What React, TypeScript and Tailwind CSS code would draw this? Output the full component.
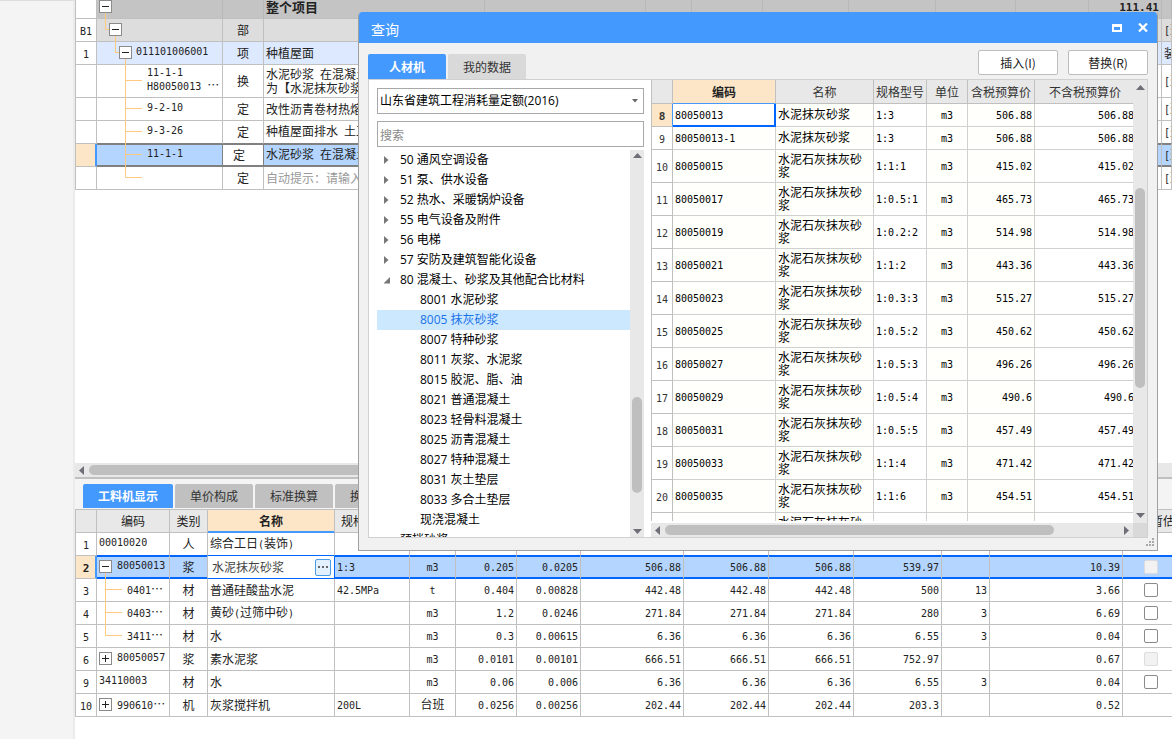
import React from "react";

const SANS = "font-['Noto_Sans_CJK_SC',sans-serif]";
const UI = "font-['Open_Sans','Noto_Sans_CJK_SC',sans-serif]";

/* Renders Latin runs in a half-width monospace beside full-width Chinese text. */
function Txt({ s, bold }: { s: string; bold?: boolean }) {
  return (
    <>
      {s.split(/([\x20-\x7e]+)/).map((part, i) =>
        i % 2 ? (
          <span
            key={i}
            className={`whitespace-pre font-['DejaVu_Sans_Mono',monospace] leading-none ${bold ? "text-[11px]" : "text-[10px]"}`}
          >
            {part}
          </span>
        ) : (
          part
        ),
      )}
    </>
  );
}

type Guide = {
  w: number;
  h?: number;
  lines?: string;
  box?: { x: number; plus?: boolean };
};

function TreeGuide({ w, h = 22, lines, box }: Guide) {
  return (
    <svg width={w} height={h} className="block shrink-0 overflow-visible" aria-hidden="true">
      {lines && <path d={lines} fill="none" stroke="#ffc981" />}
      {box && (
        <g fill="none">
          <rect x={box.x - 6} y="4.5" width="12" height="12" fill="#fff" stroke="#8a8a8a" />
          <path
            d={`M${box.x - 3.5} 10.5h7${box.plus ? "M" + box.x + " 7v7" : ""}`}
            stroke="#222"
          />
        </g>
      )}
    </svg>
  );
}

type TopRow = {
  no: string;
  guide: Guide;
  code?: string[];
  kind: string;
  name: string[];
  total?: string;
  tail?: string;
  bg: string;
  tall?: boolean;
  state?: "root" | "before" | "selected" | "hint";
};

const child = "M28.5 -1V22.5M28.5 10.5H45";
const topRows: TopRow[] = [
  { no: "", guide: { w: 39, lines: "M8.5 17V33.5H12", box: { x: 8.5 } }, kind: "", name: ["整个项目"], total: "111.41", bg: "bg-[#c4c4c4]", state: "root" },
  { no: "B1", guide: { w: 39, lines: "M8.5 -1V10.5H12M18.5 17V33.5H22", box: { x: 18.5 } }, kind: "部", name: [], tail: "[建", bg: "bg-[#dddddd]" },
  { no: "1", guide: { w: 39, lines: "M18.5 -1V10.5H22M28.5 17V23", box: { x: 28.5 } }, code: ["011101006001"], kind: "项", name: ["种植屋面"], tail: "装", bg: "bg-[#dde9ff]" },
  { no: "", guide: { w: 50, h: 32, lines: "M28.5 -1V32.5M28.5 15.5H45" }, code: ["11-1-1", "H80050013 …"], kind: "换", name: ["水泥砂浆 在混凝土", "为【水泥抹灰砂浆"], tail: "[建", bg: "bg-white", tall: true },
  { no: "", guide: { w: 50, lines: child }, code: ["9-2-10"], kind: "定", name: ["改性沥青卷材热熔"], tail: "[建", bg: "bg-white" },
  { no: "", guide: { w: 50, lines: child }, code: ["9-3-26"], kind: "定", name: ["种植屋面排水 土工"], tail: "[建", bg: "bg-white", state: "before" },
  { no: "", guide: { w: 50, lines: child }, code: ["11-1-1"], kind: "定", name: ["水泥砂浆 在混凝土"], tail: "[建", bg: "bg-[#b3d5ff]", state: "selected" },
  { no: "", guide: { w: 50, lines: "M28.5 -1V10.5H45" }, kind: "定", name: ["自动提示：请输入"], tail: "[建", bg: "bg-white", state: "hint" },
];

function Lines({ items, bold }: { items: string[]; bold?: boolean }) {
  return (
    <>
      {items.map((l) => (
        <div key={l} className="flex items-baseline">
          <Txt s={l} bold={bold} />
        </div>
      ))}
    </>
  );
}

function ItemsTable() {
  return (
    <table className="-mt-1 w-full table-fixed border-separate border-spacing-0 whitespace-nowrap border-l border-[#c0c0c0] text-xs leading-[13px] text-[#222]">
      <colgroup>
        <col className="w-[21px]" />
        <col className="w-[126px]" />
        <col className="w-[41px]" />
        <col className="w-[221px]" />
        <col className="w-[161px]" />
        <col className="w-[46px]" />
        <col className="w-[71px]" />
        <col className="w-[86px]" />
        <col className="w-[87px]" />
        <col className="w-[80px]" />
        <col className="w-[73px]" />
        <col className="w-[73px]" />
        <col />
      </colgroup>
      <tbody>
        {topRows.map((r, i) => {
          const sel = r.state === "selected";
          const root = r.state === "root";
          const edge = sel || r.state === "before" ? "border-b-[#808080]" : "border-b-[#c0c0c0]";
          const right = root ? "border-r-[#b8b8b8]" : "border-r-[#c0c0c0]";
          const ring = sel ? "shadow-[inset_0_1px_0_#808080,inset_0_-1px_0_#808080]" : "";
          const cell = `overflow-hidden border-r border-b p-0 pb-0.5 ${edge} ${ring}`;
          return (
            <tr key={i} className={r.tall ? "h-[33px]" : "h-[23px]"}>
              <td
                className={`border-r border-b border-b-[#c0c0c0] p-0 text-center ${sel ? "border-r-[#4499ff] bg-[#fde6c8] shadow-[inset_-1px_0_0_#4499ff]" : "border-r-[#c0c0c0] bg-white"}`}
              >
                <Txt s={r.no} />
              </td>
              <td className={`border-r border-b p-0 ${edge} ${ring} ${sel ? "border-r-[#808080]" : right} ${r.bg}`}>
                <div className="flex items-center">
                  <TreeGuide {...r.guide} />
                  <div className="pb-0.5">{r.code && <Lines items={r.code} />}</div>
                </div>
              </td>
              <td className={`${cell} ${sel ? "border-r-[#808080] bg-white pr-2" : `${right} ${r.bg}`} text-center`}>{r.kind}</td>
              <td
                className={`${cell} ${right} ${r.bg} pl-0.5 ${root ? "text-[13px] font-bold" : ""} ${r.state === "hint" ? "text-[#999]" : ""}`}
              >
                <Lines items={r.name} />
              </td>
              {Array.from({ length: 8 }, (_, k) => (
                <td key={k} className={`${cell} ${right} ${r.bg} text-right font-bold`}>
                  {k === 7 && r.total ? (
                    <div className="pr-0.5">
                      <Txt s={r.total} bold />
                    </div>
                  ) : null}
                </td>
              ))}
              <td className={`${cell} ${right} ${r.bg} pl-0.5`}>
                <Txt s={r.tail ?? ""} />
              </td>
            </tr>
          );
        })}
      </tbody>
    </table>
  );
}

type Res = {
  no: string;
  guide?: Guide;
  code: string;
  kind: string;
  name: string;
  spec: string;
  unit: string;
  nums: string[];
  check: "on" | "off" | "none";
};

const leaf: Guide = { w: 30, lines: "M8.5 -1V22.5M8.5 10.5H25" };
const resources: Res[] = [
  { no: "1", code: "00010020", kind: "人", name: "综合工日(装饰)", spec: "", unit: "", nums: ["", "", "", "", "", "", "", ""], check: "none" },
  { no: "2", guide: { w: 20, lines: "M8.5 17V22.5", box: { x: 8.5 } }, code: "80050013", kind: "浆", name: "水泥抹灰砂浆", spec: "1:3", unit: "m3", nums: ["0.205", "0.0205", "506.88", "506.88", "506.88", "539.97", "", "10.39"], check: "off" },
  { no: "3", guide: leaf, code: "0401…", kind: "材", name: "普通硅酸盐水泥", spec: "42.5MPa", unit: "t", nums: ["0.404", "0.00828", "442.48", "442.48", "442.48", "500", "13", "3.66"], check: "on" },
  { no: "4", guide: leaf, code: "0403…", kind: "材", name: "黄砂(过筛中砂)", spec: "", unit: "m3", nums: ["1.2", "0.0246", "271.84", "271.84", "271.84", "280", "3", "6.69"], check: "on" },
  { no: "5", guide: { w: 30, lines: "M8.5 -1V10.5H25" }, code: "3411…", kind: "材", name: "水", spec: "", unit: "m3", nums: ["0.3", "0.00615", "6.36", "6.36", "6.36", "6.55", "3", "0.04"], check: "on" },
  { no: "6", guide: { w: 20, box: { x: 8.5, plus: true } }, code: "80050057", kind: "浆", name: "素水泥浆", spec: "", unit: "m3", nums: ["0.0101", "0.00101", "666.51", "666.51", "666.51", "752.97", "", "0.67"], check: "off" },
  { no: "9", code: "34110003", kind: "材", name: "水", spec: "", unit: "m3", nums: ["0.06", "0.006", "6.36", "6.36", "6.36", "6.55", "3", "0.04"], check: "on" },
  { no: "10", guide: { w: 20, box: { x: 8.5, plus: true } }, code: "990610…", kind: "机", name: "灰浆搅拌机", spec: "200L", unit: "台班", nums: ["0.0256", "0.00256", "202.44", "202.44", "202.44", "203.3", "", "0.52"], check: "none" },
];

function ResourceTable() {
  const th = "border-r border-b border-[#c0c0c0] bg-[#e8e8e8] p-0 pb-0.5 font-normal";
  return (
    <table className="w-[calc(100%+8px)] table-fixed border-separate border-spacing-0 whitespace-nowrap border-t border-l border-[#c0c0c0] bg-white text-xs leading-[13px] text-[#222]">
      <colgroup>
        <col className="w-[21px]" />
        <col className="w-[73px]" />
        <col className="w-[38px]" />
        <col className="w-[127px]" />
        <col className="w-[75px]" />
        <col className="w-[46px]" />
        <col className="w-[61px]" />
        <col className="w-[64px]" />
        <col className="w-[103px]" />
        <col className="w-[85px]" />
        <col className="w-[85px]" />
        <col className="w-[88px]" />
        <col className="w-[48px]" />
        <col className="w-[133px]" />
        <col />
      </colgroup>
      <thead>
        <tr className="h-[23px]">
          <th className={th} />
          <th className={th}>编码</th>
          <th className={th}>类别</th>
          <th className="border-r border-b border-r-[#c0c0c0] border-b-[#4499ff] bg-[#fde6c8] p-0 pb-0.5 font-bold shadow-[inset_0_-1px_0_#4499ff]">
            名称
          </th>
          <th className={`${th} pl-1.5 text-left`}>规格型号</th>
          {Array.from({ length: 9 }, (_, k) => (
            <th key={k} className={th} />
          ))}
          <th className={th}>是否暂估</th>
        </tr>
      </thead>
      <tbody>
        {resources.map((r, i) => {
          const sel = r.no === "2";
          const edge = sel || i === 0 ? "border-b-[#0066ff]" : "border-b-[#c0c0c0]";
          const base = `border-r border-b p-0 border-r-[#c0c0c0] ${edge} ${sel ? "bg-[#b3d5ff] shadow-[inset_0_1px_0_#0066ff,inset_0_-1px_0_#0066ff]" : ""}`;
          const cell = `${base} pb-0.5`;
          const num = `${base} pb-[3px]`;
          return (
            <tr key={r.no} className="h-[23px]">
              <td
                className={`border-r border-b border-b-[#c0c0c0] p-0 text-center ${sel ? "border-r-[#4499ff] bg-[#fde6c8] font-bold shadow-[inset_-1px_0_0_#4499ff]" : "border-r-[#c0c0c0]"}`}
              >
                <Txt s={r.no} bold={sel} />
              </td>
              <td className={base}>
                <div className="flex items-center">
                  {r.guide ? <TreeGuide {...r.guide} /> : <span className="w-0.5" />}
                  <div className="flex items-baseline pb-0.5">
                    <Txt s={r.code} />
                  </div>
                </div>
              </td>
              <td className={`${cell} text-center`}>{r.kind}</td>
              {sel ? (
                <td className="border-r border-b border-[#0066ff] bg-white p-0">
                  <div className="flex h-[22px] items-center gap-1 pr-[3px] pl-1">
                    <input
                      aria-label="名称"
                      defaultValue={r.name}
                      className="min-w-0 flex-1 bg-transparent text-xs text-[#444] outline-none"
                    />
                    <button
                      aria-label="选择"
                      className="flex h-[17px] w-4 items-center justify-center rounded-xs border border-[#4a9be8] bg-[#e3f0fd]"
                    >
                      <svg width="10" height="2" className="shrink-0" aria-hidden="true">
                        <path d="M0 1h2m2 0h2m2 0h2" stroke="#666" strokeWidth="2" />
                      </svg>
                    </button>
                  </div>
                </td>
              ) : (
                <td className={`${cell} pl-0.5`}>
                  <Txt s={r.name} />
                </td>
              )}
              <td className={`${num} pl-0.5`}>
                <Txt s={r.spec} />
              </td>
              <td className={`${num} text-center`}>
                <Txt s={r.unit} />
              </td>
              {r.nums.map((n, k) => (
                <td key={k} className={`${num} pr-0.5 text-right`}>
                  <Txt s={n} />
                </td>
              ))}
              <td className={base}>
                {r.check !== "none" && (
                  <input
                    type="checkbox"
                    aria-label={`暂估 ${r.no}`}
                    disabled={r.check === "off"}
                    className="mx-auto block size-3.5 appearance-none rounded-xs border border-[#8a8a8a] bg-white disabled:border-[#dcdcdc] disabled:bg-[#f2f2f2]"
                  />
                )}
              </td>
            </tr>
          );
        })}
      </tbody>
    </table>
  );
}

function Arrow({ dir }: { dir: "up" | "down" | "left" | "right" }) {
  const d = { up: "M0 5L4.500 0L9 5z", down: "M0 0H9L4.500 5z", left: "M5 0V9L0 4.500z", right: "M0 0V9L5 4.500z" }[dir];
  const v = dir === "up" || dir === "down";
  return (
    <svg width={v ? 9 : 5} height={v ? 5 : 9} className="block shrink-0" aria-hidden="true">
      <path d={d} fill="#6e6e78" />
    </svg>
  );
}

const tree: { label: string; level: 0 | 1; open?: boolean; leaf?: boolean; selected?: boolean }[] = [
  { label: "50 通风空调设备", level: 0 },
  { label: "51 泵、供水设备", level: 0 },
  { label: "52 热水、采暖锅炉设备", level: 0 },
  { label: "55 电气设备及附件", level: 0 },
  { label: "56 电梯", level: 0 },
  { label: "57 安防及建筑智能化设备", level: 0 },
  { label: "80 混凝土、砂浆及其他配合比材料", level: 0, open: true },
  { label: "8001 水泥砂浆", level: 1 },
  { label: "8005 抹灰砂浆", level: 1, selected: true },
  { label: "8007 特种砂浆", level: 1 },
  { label: "8011 灰浆、水泥浆", level: 1 },
  { label: "8015 胶泥、脂、油", level: 1 },
  { label: "8021 普通混凝土", level: 1 },
  { label: "8023 轻骨料混凝土", level: 1 },
  { label: "8025 沥青混凝土", level: 1 },
  { label: "8027 特种混凝土", level: 1 },
  { label: "8031 灰土垫层", level: 1 },
  { label: "8033 多合土垫层", level: 1 },
  { label: "现浇混凝土", level: 1 },
  { label: "预拌砂浆", level: 0, leaf: true },
];

const LONG = "水泥石灰抹灰砂浆";
const prices: [string, string, string, string, string][] = [
  ["8", "80050013", "水泥抹灰砂浆", "1:3", "506.88"],
  ["9", "80050013-1", "水泥抹灰砂浆", "1:3", "506.88"],
  ["10", "80050015", LONG, "1:1:1", "415.02"],
  ["11", "80050017", LONG, "1:0.5:1", "465.73"],
  ["12", "80050019", LONG, "1:0.2:2", "514.98"],
  ["13", "80050021", LONG, "1:1:2", "443.36"],
  ["14", "80050023", LONG, "1:0.3:3", "515.27"],
  ["15", "80050025", LONG, "1:0.5:2", "450.62"],
  ["16", "80050027", LONG, "1:0.5:3", "496.26"],
  ["17", "80050029", LONG, "1:0.5:4", "490.6"],
  ["18", "80050031", LONG, "1:0.5:5", "457.49"],
  ["19", "80050033", LONG, "1:1:4", "471.42"],
  ["20", "80050035", LONG, "1:1:6", "454.51"],
  ["", "", LONG, "", ""],
];

function PriceTable() {
  const th = "border-r border-b border-[#c0c0c0] bg-[#e8e8e8] p-0 font-normal text-[#333]";
  const td = "border-r border-b border-[#d0d0d0] p-0 pb-[3px]";
  return (
    <table className="w-[calc(100%+3px)] table-fixed border-separate border-spacing-0 border-l border-[#c0c0c0] text-xs leading-[13px] text-black">
      <colgroup>
        <col className="w-[21px]" />
        <col className="w-[103px]" />
        <col className="w-[98px]" />
        <col className="w-[53px]" />
        <col className="w-[41px]" />
        <col className="w-[67px]" />
        <col />
      </colgroup>
      <thead>
        <tr className="h-6 whitespace-nowrap">
          <th className={th} />
          <th className="border-r border-b border-r-[#c0c0c0] border-b-[#4499ff] bg-[#fde6c8] p-0 font-bold text-[#222]">编码</th>
          <th className={th}>名称</th>
          <th className={th}>规格型号</th>
          <th className={th}>单位</th>
          <th className={th}>含税预算价</th>
          <th className={th}>不含税预算价</th>
        </tr>
      </thead>
      <tbody>
        {prices.map(([no, code, name, spec, price], i) => (
          <tr key={i} className={i < 2 ? "h-[23px]" : "h-[33px]"}>
            <td
              className={`border-r border-b border-b-[#c0c0c0] p-0 text-center text-[#333] ${i === 0 ? "border-r-[#4499ff] bg-[#fde6c8] font-bold" : "border-r-[#c0c0c0] bg-white"}`}
            >
              <Txt s={no} bold={i === 0} />
            </td>
            <td
              className={`border-r border-b p-0 pb-[3px] pl-0.5 ${i === 0 ? "border-[#0066ff] bg-white shadow-[inset_-1px_-1px_0_#0066ff]" : "border-[#d0d0d0] bg-[#fffffb]"}`}
            >
              <Txt s={code} />
            </td>
            <td className={`${td} bg-[#fffffb] px-0.5`}>{name}</td>
            <td className={`${td} bg-white pl-0.5`}>
              <Txt s={spec} />
            </td>
            <td className={`${td} bg-[#fffffb] text-center`}>
              <Txt s={price ? "m3" : ""} />
            </td>
            <td className={`${td} bg-[#fffffb] pr-0.5 text-right`}>
              <Txt s={price} />
            </td>
            <td className={`${td} bg-white pr-px text-right`}>
              <Txt s={price} />
            </td>
          </tr>
        ))}
      </tbody>
    </table>
  );
}

function QueryDialog() {
  return (
    <section
      role="dialog"
      aria-label="查询"
      className="absolute top-3 right-[14px] left-[358px] flex h-[539px] flex-col overflow-hidden rounded-t border border-t-0 border-[#a0a0a0] bg-[#f1f1f1]"
    >
      <header className="flex h-[31px] shrink-0 items-center justify-between bg-[#4499ff] pr-[9px] pl-3 text-white">
        <h2 className="pt-0.5 text-sm leading-5">查询</h2>
        <div className="flex items-center gap-4">
          <button aria-label="最大化">
            <svg width="10" height="8" className="block" aria-hidden="true">
              <path d="M0 0h10v8H0zM2 3v3h6V3z" fill="#fff" fillRule="evenodd" />
            </svg>
          </button>
          <button aria-label="关闭">
            <svg width="10" height="9" className="block" aria-hidden="true">
              <path d="M1 0.500L9 8.500M9 0.500L1 8.500" fill="none" stroke="#fff" strokeWidth="2.2" />
            </svg>
          </button>
        </div>
      </header>
      <div className="flex h-9 shrink-0 items-end justify-between pr-[9px] pl-[9px]">
        <div className="flex gap-0.5 text-xs" role="tablist">
          <button role="tab" aria-selected="true" className="h-[25px] w-[78px] rounded-t-xs bg-[#4499ff] font-bold text-white">
            人材机
          </button>
          <button role="tab" aria-selected="false" className="h-[25px] w-[78px] rounded-t-xs bg-[#d9d9d9] text-[#333]">
            我的数据
          </button>
        </div>
        <div className="flex gap-2.5 pb-1 text-xs text-[#222]">
          <button className="h-[25px] w-20 rounded-xs border border-[#bdbdbd] bg-white">插入(I)</button>
          <button className="h-[25px] w-20 rounded-xs border border-[#bdbdbd] bg-white">替换(R)</button>
        </div>
      </div>
      <div className="mx-[9px] flex min-h-0 flex-1 border border-[#d0d0d0] bg-white">
        <div className="flex w-[282px] shrink-0 flex-col gap-[7px] pt-2 pr-[7px] pl-2">
          <div className="relative shrink-0">
            <select
              aria-label="定额库"
              className={`block h-[26px] w-full appearance-none border border-[#a8a8a8] bg-white pl-0.5 text-xs text-black ${UI}`}
            >
              <option>山东省建筑工程消耗量定额(2016)</option>
            </select>
            <svg width="6" height="4" className="pointer-events-none absolute top-[11px] right-1.5" aria-hidden="true">
              <path d="M0 0H6L3 3.500z" fill="#666" />
            </svg>
          </div>
          <input
            aria-label="搜索"
            placeholder="搜索"
            className="block h-[26px] w-full shrink-0 border border-[#a8a8a8] bg-white pl-0.5 text-xs placeholder:text-[#8a8a8a]"
          />
          <div className="-mt-1 flex min-h-0 flex-1">
            <ul className={`min-w-0 flex-1 overflow-hidden text-xs text-black ${UI}`}>
              {tree.map((n) => (
                <li key={n.label}>
                  <button
                    className={`flex h-5 w-full items-center whitespace-nowrap ${n.level ? "pl-[43px]" : "pl-[7px]"} ${n.selected ? "bg-[#cce8ff] text-[#1a73e8]" : ""}`}
                  >
                    {n.level === 0 && (
                      <svg width="16" height="8" className="block shrink-0" aria-hidden="true">
                        {!n.leaf && <path d={n.open ? "M6 1V7.500H-0.500z" : "M0 0L4.500 4L0 8z"} fill="#777" />}
                      </svg>
                    )}
                    {n.label}
                  </button>
                </li>
              ))}
            </ul>
            <div className="flex w-3.5 shrink-0 flex-col items-center bg-[#e8e8e8] py-[3px]">
              <Arrow dir="up" />
              <div className="flex-1" />
              <div className="mb-9 h-24 w-2.5 rounded-full bg-[#bfbfbf]" />
              <Arrow dir="down" />
            </div>
          </div>
        </div>
        <div className="flex min-w-0 flex-1 flex-col">
          <div className="flex min-h-0 flex-1">
            <div className="min-w-0 flex-1 overflow-hidden border-b-2 border-white">
              <PriceTable />
            </div>
            <div className="flex w-3.5 shrink-0 flex-col items-center bg-[#e8e8e8] py-[5px]">
              <Arrow dir="up" />
              <div className="mt-[98px] h-[200px] w-2.5 rounded-full bg-[#bfbfbf]" />
              <div className="flex-1" />
              <Arrow dir="down" />
            </div>
          </div>
          <div className="flex h-3.5 shrink-0 bg-[#d9d9d9] pr-3.5">
            <div className="flex flex-1 items-center bg-[#e8e8e8] px-1">
              <Arrow dir="left" />
              <div className="mr-[70px] ml-[5px] h-2.5 flex-1 rounded-full bg-[#bfbfbf]" />
              <Arrow dir="right" />
            </div>
          </div>
        </div>
      </div>
      <footer className="flex h-3 shrink-0 justify-end pr-[3px]">
        <svg width="8" height="8" className="block" aria-hidden="true">
          <path d="M6 0h2v2H6zM3 3h2v2H3zM6 3h2v2H6zM0 6h2v2H0zM3 6h2v2H3zM6 6h2v2H6z" fill="#a8a8a8" />
        </svg>
      </footer>
    </section>
  );
}

export default function App() {
  const tab = "h-6 rounded-t-xs bg-[#c0c0c0] text-[#333]";
  return (
    <div lang="zh-CN" className={`relative flex h-screen overflow-hidden bg-white ${SANS}`}>
      <aside className="w-[75px] shrink-0 border-t border-r-2 border-t-[#dedede] border-r-[#ebebeb] bg-[#f4f4f4]" />
      <main className="flex min-w-0 flex-1 flex-col">
        <div className="min-h-0 flex-1 overflow-hidden">
          <ItemsTable />
        </div>
        <div className="flex h-3.5 shrink-0 items-center bg-[#e8e8e8] pl-1">
          <Arrow dir="left" />
          <div className="mr-4 ml-[5px] h-2.5 flex-1 rounded-full bg-[#bfbfbf]" />
        </div>
        <div className="h-[262px] shrink-0 overflow-hidden border-t-2 border-[#c0c0c0]">
          <div className="flex gap-0.5 bg-[#f4f4f4] pt-[5px] pb-px pl-2 text-xs" role="tablist">
            <button role="tab" aria-selected="true" className="h-6 w-[90px] rounded-t-xs bg-[#4499ff] font-bold text-white">
              工料机显示
            </button>
            <button role="tab" aria-selected="false" className={`${tab} w-[78px]`}>
              单价构成
            </button>
            <button role="tab" aria-selected="false" className={`${tab} w-[78px]`}>
              标准换算
            </button>
            <button role="tab" aria-selected="false" className={`${tab} w-[78px]`}>
              换算信息
            </button>
          </div>
          <ResourceTable />
        </div>
      </main>
      <QueryDialog />
    </div>
  );
}
